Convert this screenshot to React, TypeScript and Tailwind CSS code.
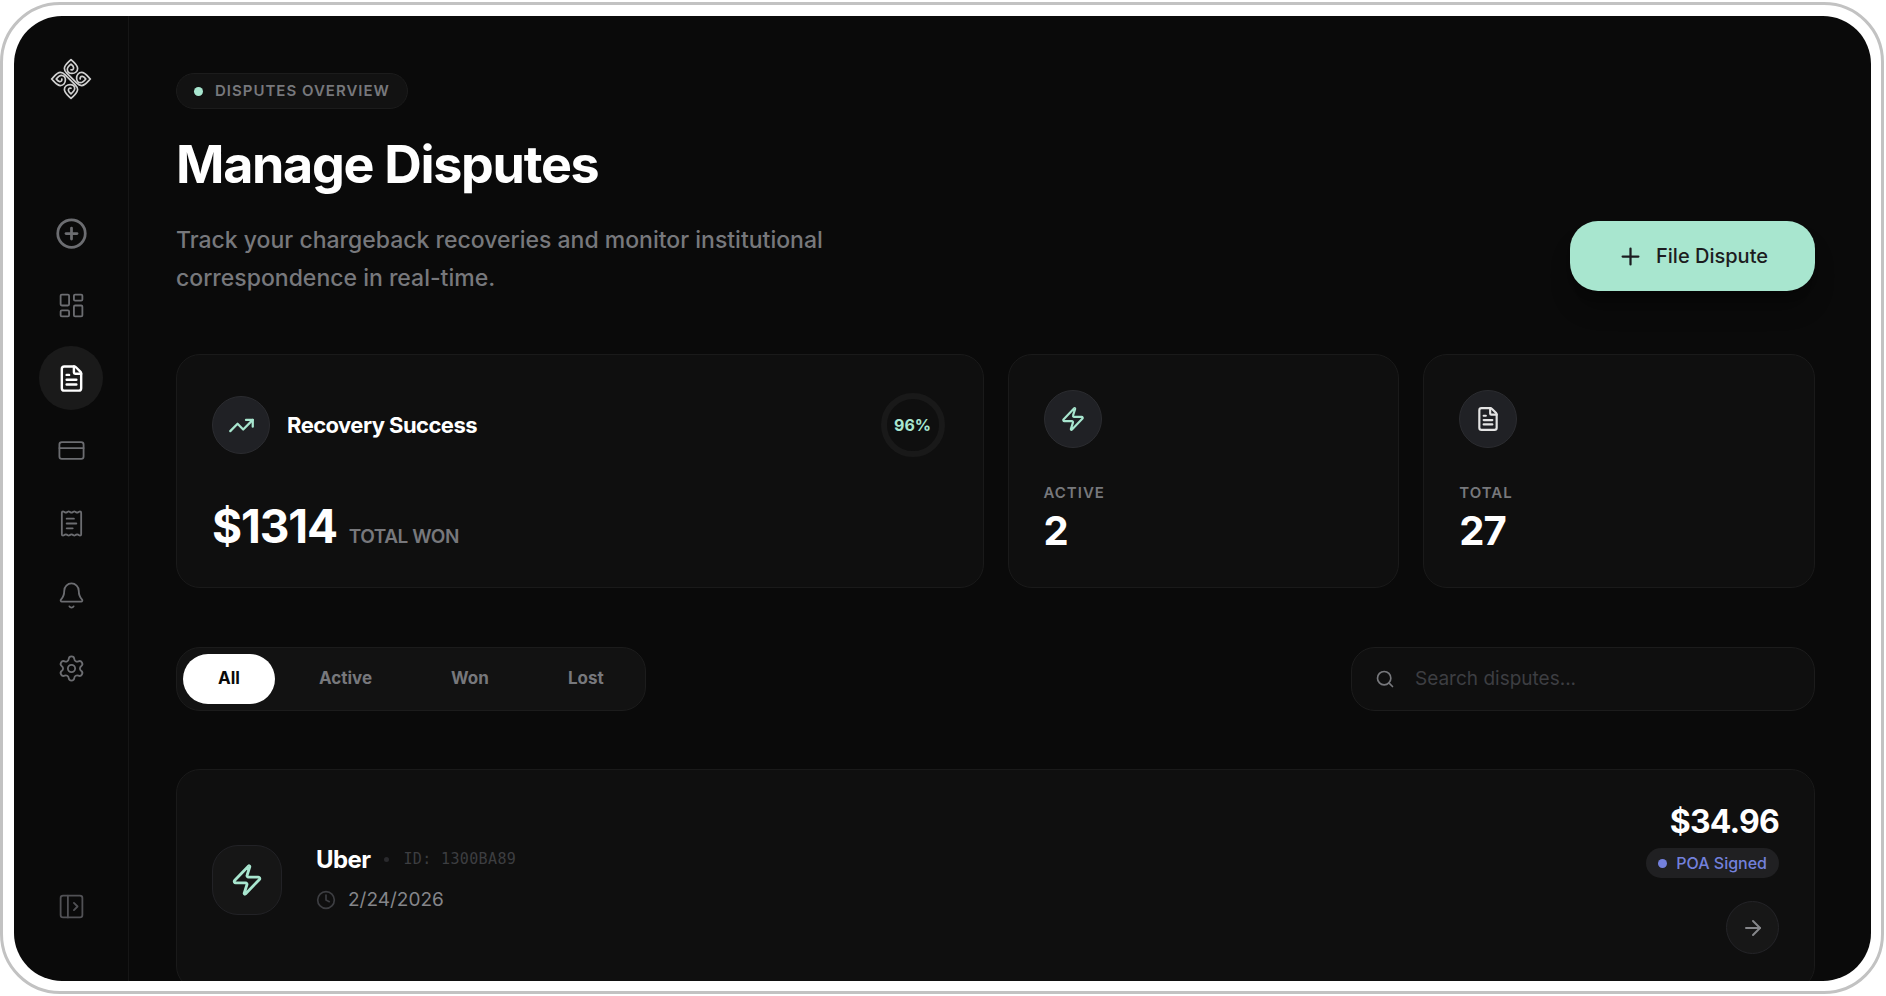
import { useState } from 'react';
import type { ReactNode } from 'react';
import {
    ArrowRight,
    Bell,
    CirclePlus,
    Clock,
    CreditCard,
    FileText,
    LayoutDashboard,
    PanelLeftOpen,
    Plus,
    ReceiptText,
    Search,
    Settings,
    TrendingUp,
    Zap,
} from 'lucide-react';
import type { LucideIcon } from 'lucide-react';

interface NavItem {
    label: string;
    icon: LucideIcon;
    size?: number;
}

const NAV: NavItem[] = [
    { label: 'New', icon: CirclePlus, size: 33 },
    { label: 'Dashboard', icon: LayoutDashboard },
    { label: 'Disputes', icon: FileText },
    { label: 'Cards', icon: CreditCard },
    { label: 'Receipts', icon: ReceiptText },
    { label: 'Notifications', icon: Bell },
    { label: 'Settings', icon: Settings },
];

const TABS = ['All', 'Active', 'Won', 'Lost'];

// One strand runs from the top swirl through the middle into the right swirl
const STRAND =
    'M-0.6 -9.6C0.8 -8.4 2.8 -9.4 2.6 -11.4C2.4 -13 1.2 -13.8 0 -14.8C-2 -13.2 -3.7 -11.8 -3.7 -9.6C-3.7 -7.2 -1.8 -5.6 0.8 -5.6C4.4 -5.6 6.6 -7.8 6.6 -10.6C6.6 -14 3 -16.4 0 -19.4C-3 -16.4 -6.6 -14 -6.6 -10.6C-6.6 -8.4 -5.6 -7.2 -4.2 -5.8L5.8 4.2C7.2 5.6 8.4 6.6 10.6 6.6C14 6.6 16.4 3 19.4 0C16.4 -3 14 -6.6 10.6 -6.6C7.8 -6.6 5.6 -4.4 5.6 -0.8C5.6 1.8 7.2 3.7 9.6 3.7C11.8 3.7 13.2 2 14.8 0C13.8 -1.2 13 -2.4 11.4 -2.6C9.4 -2.8 8.4 -0.8 9.6 0.6';

function Logo() {
    return (
        <svg viewBox="-21 -21 42 42" className="w-[42px] h-[42px]" fill="none" stroke="#d0d0d0" strokeWidth="1.7" strokeLinejoin="round" aria-hidden="true">
            <path d={STRAND} />
            <path d={STRAND} transform="rotate(180)" />
        </svg>
    );
}

function Sidebar() {
    return (
        <aside className="w-[115px] shrink-0 border-r border-[#161616] flex flex-col items-center pt-[42px] pb-[60px]">
            <a href="#home" aria-label="Home">
                <Logo />
            </a>
            <nav className="mt-[101px] h-[499px] flex flex-col justify-between">
                {NAV.map(({ label, icon: Icon, size = 29 }) => {
                    const active = label === 'Disputes';
                    return (
                        <a
                            key={label}
                            href={`#${label.toLowerCase()}`}
                            aria-label={label}
                            className={`w-16 h-16 rounded-full flex items-center justify-center ${active ? 'bg-[#1a1a1a] text-white' : 'text-[#6c6d71]'}`}
                        >
                            <Icon size={size} strokeWidth={active || label === 'New' ? 2 : 1.5} />
                        </a>
                    );
                })}
            </nav>
            <button aria-label="Expand sidebar" className="mt-auto text-[#515155]">
                <PanelLeftOpen size={29} strokeWidth={1.5} />
            </button>
        </aside>
    );
}

function IconCircle({ children }: { children: ReactNode }) {
    return (
        <div className="w-[58px] h-[58px] rounded-full bg-[#202125] border border-[#2b2c30] flex items-center justify-center">
            {children}
        </div>
    );
}

function StatCard({ label, value, children }: { label: string; value: string; children: ReactNode }) {
    return (
        <div className="rounded-3xl bg-[#0f0f0f] border border-[#1a1a1a] p-[35px] flex flex-col">
            <IconCircle>{children}</IconCircle>
            <p className="mt-[35px] text-[15px] leading-5 font-semibold tracking-[1px] text-[#77787c] uppercase">{label}</p>
            <p className="mt-[7px] text-[40px] leading-[42px] font-bold tracking-tight">{value}</p>
        </div>
    );
}

export default function App() {
    const [tab, setTab] = useState('All');

    return (
        <div className="h-screen bg-white pt-[2px] pr-[2px] pb-[2px]" style={{ fontFamily: 'Inter, sans-serif' }}>
            <div className="h-full rounded-[60px] border-[3px] border-[#c2c2c2] bg-white pt-[11px] pl-[11px] pr-[10px] pb-[10px]">
                <div className="h-full rounded-[48px] bg-[#0a0a0a] overflow-hidden flex text-white">
                    <Sidebar />
                    <main className="flex-1 min-w-0 overflow-hidden pl-[47px] pr-14 pt-[57px]">
                        <header className="flex items-end justify-between">
                            <div>
                                <div className="inline-flex items-center gap-3 h-9 px-[17px] rounded-full bg-[#121212] border border-[#1c1c1c]">
                                    <span className="w-[9px] h-[9px] rounded-full bg-[#a8e6cf]" />
                                    <span className="text-[15px] font-semibold tracking-[1px] text-[#77787c]">DISPUTES OVERVIEW</span>
                                </div>
                                <h1 className="mt-6 text-[52px] leading-[64px] font-bold tracking-tight">Manage Disputes</h1>
                                <p className="mt-6 max-w-[700px] text-[23px] leading-[38px] font-medium text-[#77787c]">
                                    Track your chargeback recoveries and monitor institutional correspondence in real-time.
                                </p>
                            </div>
                            <button className="mb-1.5 h-[70px] px-[47px] rounded-[28px] bg-[#a8e6cf] text-[#1c1c20] text-[20px] font-medium flex items-center gap-3 shadow-xl shadow-black/30">
                                <Plus size={27} strokeWidth={2} />
                                File Dispute
                            </button>
                        </header>

                        <section className="mt-[57px] grid grid-cols-4 gap-6">
                            <div className="col-span-2 rounded-3xl bg-[#0f0f0f] border border-[#1a1a1a] p-[35px] flex flex-col justify-between">
                                <div className="flex items-center justify-between">
                                    <div className="flex items-center gap-[17px]">
                                        <IconCircle>
                                            <TrendingUp size={27} strokeWidth={2} className="text-[#a8e6cf]" />
                                        </IconCircle>
                                        <h2 className="text-[22px] font-bold tracking-tight">Recovery Success</h2>
                                    </div>
                                    <div className="w-[70px] h-[70px] flex items-center justify-center">
                                        <div className="w-16 h-16 rounded-full border-[6px] border-[#191919] flex items-center justify-center text-[16px] font-bold text-[#a8e6cf]">
                                            96%
                                        </div>
                                    </div>
                                </div>
                                <p className="flex items-baseline gap-3">
                                    <span className="text-[46px] leading-[52px] font-bold tracking-tight">$1314</span>
                                    <span className="text-[19px] font-semibold tracking-tight text-[#77787c]">TOTAL WON</span>
                                </p>
                            </div>
                            <StatCard label="Active" value="2">
                                <Zap size={26} strokeWidth={2} className="text-[#a8e6cf]" />
                            </StatCard>
                            <StatCard label="Total" value="27">
                                <FileText size={26} strokeWidth={2} className="text-[#e4e4e4]" />
                            </StatCard>
                        </section>

                        <section className="mt-[59px] flex items-center justify-between">
                            <div className="flex gap-[9px] p-[6px] rounded-3xl bg-[#121212] border border-[#1c1c1c]">
                                {TABS.map((name) => (
                                    <button
                                        key={name}
                                        onClick={() => setTab(name)}
                                        className={`h-[50px] px-[35px] rounded-[25px] text-[17px] font-bold ${tab === name ? 'bg-white text-[#0a0a0a]' : 'text-[#77787c]'}`}
                                    >
                                        {name}
                                    </button>
                                ))}
                            </div>
                            <label className="w-[464px] h-16 px-[23px] rounded-3xl bg-[#0f0f0f] border border-[#1c1c1c] flex items-center gap-5">
                                <Search size={20} strokeWidth={2} className="text-[#77787c] shrink-0" />
                                <input
                                    type="text"
                                    aria-label="Search disputes"
                                    placeholder="Search disputes..."
                                    className="flex-1 min-w-0 bg-transparent outline-none text-[19px] placeholder:text-[#3d3e42]"
                                />
                            </label>
                        </section>

                        {/* Dispute list */}
                        <article className="mt-[58px] rounded-3xl bg-[#0f0f0f] border border-[#1a1a1a] p-[35px] flex items-center justify-between">
                            <div className="flex items-center gap-[34px]">
                                <div className="w-[70px] h-[70px] rounded-[26px] bg-[#161616] border border-[#222226] flex items-center justify-center">
                                    <Zap size={34} strokeWidth={2} className="text-[#a8e6cf]" />
                                </div>
                                <div>
                                    <div className="flex items-center gap-[14px]">
                                        <h3 className="text-[24px] leading-8 font-bold tracking-tight">Uber</h3>
                                        <span className="w-[5px] h-[5px] rounded-full bg-[#2a2a2d]" />
                                        <span className="text-[15px] tracking-wide text-[#3d3e41]" style={{ fontFamily: '"DejaVu Sans Mono", monospace' }}>
                                            ID: 1300BA89
                                        </span>
                                    </div>
                                    <div className="mt-2 flex items-center gap-3 text-[19px] leading-8 text-[#85868a]">
                                        <Clock size={20} strokeWidth={2} className="text-[#3d3e42]" />
                                        <time dateTime="2026-02-24">2/24/2026</time>
                                    </div>
                                </div>
                            </div>
                            <div className="flex flex-col items-end">
                                <p className="text-[32px] leading-[34px] font-bold tracking-tight">$34.96</p>
                                <span className="mt-[9px] h-[30px] px-3 rounded-full bg-[#202022] text-[#7380dc] text-[16px] font-medium inline-flex items-center gap-[9px]">
                                    <span className="w-[9px] h-[9px] rounded-full bg-[#7380dc]" />
                                    POA Signed
                                </span>
                                <button aria-label="Open dispute" className="mt-[23px] w-[53px] h-[53px] rounded-full bg-[#171717] border border-[#242428] text-[#85868a] flex items-center justify-center">
                                    <ArrowRight size={24} strokeWidth={2} />
                                </button>
                            </div>
                        </article>
                    </main>
                </div>
            </div>
        </div>
    );
}
